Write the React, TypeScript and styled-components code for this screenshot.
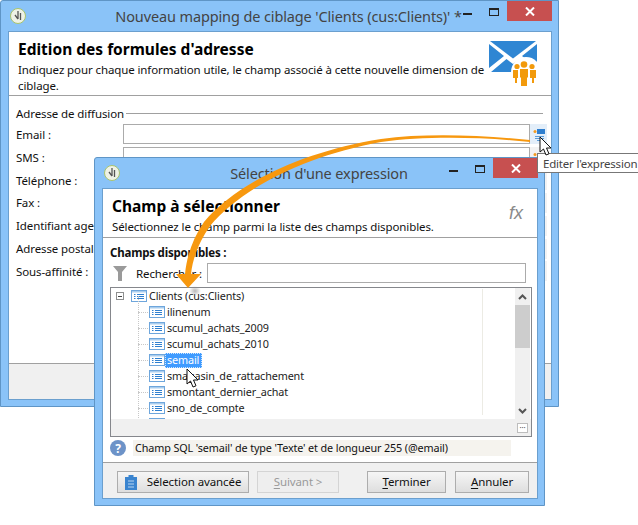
import styled, { createGlobalStyle } from "styled-components";

const GlobalStyle = createGlobalStyle`
  html, body {
    margin: 0;
    padding: 0;
    background: #fff;
  }
  body {
    font-family: "Noto Sans", "Open Sans", sans-serif;
    font-size: 11.5px;
    letter-spacing: -0.1px;
    color: #111;
  }
`;

const Desktop = styled.div`
  position: relative;
  width: 638px;
  height: 525px;
  overflow: hidden;
  background: #fff;
`;

const Window = styled.div<{ $x: number; $y: number; $w: number; $h: number }>`
  position: absolute;
  left: ${({ $x }) => $x}px;
  top: ${({ $y }) => $y}px;
  width: ${({ $w }) => $w}px;
  height: ${({ $h }) => $h}px;
  box-sizing: border-box;
  display: flex;
  flex-direction: column;
  padding: 0 6px 6px 7px;
  background: #8ac3f8;
  border: 1px solid #5f95c6;
  border-top-left-radius: 3px;
`;

const TitleBar = styled.div`
  height: 30px;
  flex: none;
  display: flex;
  align-items: flex-start;
`;

const AppIcon = styled.svg`
  flex: none;
  margin: 7px 0 0 2px;
`;

const Title = styled.div<{ $inset: number }>`
  flex: 1;
  min-width: 0;
  margin-left: ${({ $inset }) => $inset}px;
  padding-top: 5px;
  text-align: center;
  font-size: 14.5px;
  letter-spacing: -0.12px;
  line-height: 20px;
  color: #444;
  white-space: nowrap;
`;

const Controls = styled.div`
  flex: none;
  display: flex;
  width: 89px;
`;

const MinButton = styled.div`
  width: 9px;
  height: 2px;
  margin: 12px 17px 0 0;
  background: #222;
`;

const MaxButton = styled.div`
  width: 10px;
  height: 8px;
  box-sizing: border-box;
  margin: 7px 8px 0 0;
  border: 1px solid #222;
  border-top-width: 2px;
`;

const CloseButton = styled.div`
  width: 45px;
  height: 20px;
  display: flex;
  align-items: center;
  justify-content: center;
  background: #c75050;
`;

const Client = styled.div`
  flex: 1;
  min-height: 0;
  display: flex;
  flex-direction: column;
  background: #fff;
  border: 1px solid #6b9fce;
`;

const Header = styled.div<{ $height: number }>`
  position: relative;
  flex: none;
  height: ${({ $height }) => $height}px;
  box-sizing: border-box;
  padding: 6px 0 0 9px;
  border-bottom: 1px solid #a0a0a0;
`;

const Heading = styled.div`
  font-size: 15.5px;
  letter-spacing: 0;
  line-height: 22px;
  font-weight: 700;
  color: #000;
`;

const Description = styled.div`
  margin-top: 2px;
  line-height: 15.5px;
  white-space: nowrap;
`;

const HeaderGraphic = styled.svg`
  position: absolute;
  right: 14px;
  top: 9px;
`;

const FxMark = styled.div`
  position: absolute;
  right: 14px;
  top: 14px;
  font-family: "Liberation Sans", sans-serif;
  font-style: italic;
  font-size: 18px;
  letter-spacing: 0;
  color: #8a8a8a;
`;

const Body = styled.div`
  flex: 1;
  min-height: 0;
  padding: 7px 5px 0 7px;
`;

const GroupTitle = styled.div`
  display: flex;
  align-items: center;
  gap: 2px;
  height: 20px;
  margin-right: 3px;
  white-space: nowrap;

  &::after {
    content: "";
    flex: 1;
    height: 1px;
    background: #a0a0a0;
  }
`;

const FieldRow = styled.div`
  display: grid;
  grid-template-columns: 107px 407px 17px;
  align-items: center;
  height: 22.83px;
  white-space: nowrap;
`;

const FieldInput = styled.div`
  height: 20px;
  box-sizing: border-box;
  border: 1px solid #ababab;
  background: #fff;
`;

const FieldAction = styled.div<{ $hover?: boolean }>`
  height: 20px;
  display: flex;
  align-items: center;
  justify-content: center;
  background: ${({ $hover }) => ($hover ? "#e3eef9" : "#f2f2f2")};
`;

const Footer = styled.div<{ $height: number }>`
  flex: none;
  height: ${({ $height }) => $height}px;
  box-sizing: border-box;
  display: flex;
  align-items: center;
  padding: 2px 8px 0 14px;
  background: #f0f0f0;
  border-top: 1px solid #a0a0a0;
`;

const BoldLabel = styled.div`
  margin: -1px 0 1px;
  font-weight: 700;
  line-height: 18px;
  letter-spacing: -0.2px;
`;

const SearchRow = styled.div`
  display: flex;
  align-items: center;
  height: 20px;
  margin: 1px 6px 4px 0;
`;

const SearchLabel = styled.div`
  width: 71px;
  margin-left: 9px;
`;

const SearchInput = styled.div`
  flex: 1;
  height: 20px;
  box-sizing: border-box;
  border: 1px solid #ababab;
  background: #fff;
`;

const TreeBox = styled.div`
  height: 150px;
  box-sizing: border-box;
  display: flex;
  flex-direction: column;
  border: 1px solid #85878c;
  background: #f0f0f0;
`;

const TreeTop = styled.div`
  position: relative;
  flex: none;
  height: 131px;
  display: flex;
  background: #fff;
  overflow: hidden;
`;

const TreeList = styled.div`
  flex: 1;
`;

const TreeColumnRule = styled.div`
  flex: none;
  width: 1px;
  height: 126px;
  margin: 1px 32px 0 0;
  background: #ecebe4;
`;

const TreeRow = styled.div<{ $child?: boolean }>`
  position: relative;
  height: 16px;
  display: flex;
  align-items: center;
  padding-left: ${({ $child }) => ($child ? 38 : 5)}px;
  line-height: 16px;
  white-space: nowrap;

  ${({ $child }) =>
    $child &&
    `&::before {
      content: "";
      position: absolute;
      left: 27px;
      top: 8px;
      width: 10px;
      border-top: 1px dotted #c8c8c8;
    }
    &::after {
      content: "";
      position: absolute;
      left: 27px;
      top: -8px;
      height: 16px;
      border-left: 1px dotted #c8c8c8;
    }`}
`;

const Expander = styled.div`
  width: 8px;
  height: 8px;
  box-sizing: border-box;
  margin-right: 7px;
  display: flex;
  align-items: center;
  justify-content: center;
  border: 1px solid #8e8f8f;

  &::after {
    content: "";
    width: 4px;
    height: 1px;
    background: #444;
  }
`;

const RowText = styled.span<{ $selected?: boolean }>`
  height: 15px;
  line-height: 14px;
  padding: 0 3px 0 2px;
  font-size: 10.8px;
  letter-spacing: -0.12px;
  box-sizing: border-box;
  color: ${({ $selected }) => ($selected ? "#fff" : "#222")};
  background: ${({ $selected }) => ($selected ? "#3f9bff" : "transparent")};
  outline: ${({ $selected }) => ($selected ? "1px dotted #cfe6ff" : "none")};
  outline-offset: -1px;
`;

const Scrollbar = styled.div`
  flex: none;
  width: 15px;
  margin-right: 1px;
  display: flex;
  flex-direction: column;
  background: #f0f0f0;
`;

const ScrollArrow = styled.div`
  height: 17px;
  display: flex;
  align-items: center;
  justify-content: center;
`;

const ScrollThumb = styled.div`
  height: 43px;
  flex: none;
  background: #cdcdcd;
`;

const ScrollTrack = styled.div`
  flex: 1;
`;

const TreeCorner = styled.div`
  flex: 1;
  display: flex;
  justify-content: flex-end;
  align-items: center;
  padding-right: 3px;
`;

const CornerButton = styled.div`
  width: 11px;
  height: 10px;
  box-sizing: border-box;
  display: flex;
  align-items: center;
  justify-content: center;
  border: 1px solid #bdbdbd;
  background: #fff;
  font-size: 8px;
  line-height: 6px;
  color: #555;
`;

const StatusRow = styled.div`
  display: flex;
  align-items: center;
  gap: 7px;
  height: 16px;
  margin: 3px 21px 6px 0;
`;

const StatusText = styled.div`
  flex: 1;
  height: 16px;
  line-height: 15px;
  padding-left: 2px;
  font-size: 10.8px;
  letter-spacing: -0.12px;
  background: #f5f3ee;
  white-space: nowrap;
`;

const DialogButton = styled.div<{ $width: number; $disabled?: boolean; $gap?: number }>`
  width: ${({ $width }) => $width}px;
  height: 22px;
  margin-left: ${({ $gap }) => $gap ?? 0}px;
  box-sizing: border-box;
  flex: none;
  display: flex;
  align-items: center;
  justify-content: center;
  gap: 10px;
  border: 1px solid ${({ $disabled }) => ($disabled ? "#d4d4d4" : "#adadad")};
  background: ${({ $disabled }) =>
    $disabled ? "#eeeeee" : "linear-gradient(#f6f6f6, #dedede)"};
  color: ${({ $disabled }) => ($disabled ? "#9a9a9a" : "#111")};
  white-space: nowrap;

  u {
    text-underline-offset: 2px;
  }
`;

const Tooltip = styled.div`
  position: absolute;
  left: 537px;
  top: 153px;
  width: 101px;
  height: 20px;
  box-sizing: border-box;
  padding-left: 5px;
  line-height: 19px;
  letter-spacing: -0.2px;
  white-space: nowrap;
  color: #444;
  background: #fff;
  border: 1px solid #777;
  border-width: 1px 0 1px 1px;
`;

const Overlay = styled.svg`
  position: absolute;
  left: 0;
  top: 0;
  pointer-events: none;
`;

const ListIcon = () => (
  <svg width="16" height="12" viewBox="0 0 16 12" style={{ flex: "none" }}>
    <rect x="0.5" y="0.5" width="15" height="11" fill="#fff" stroke="#6ea6dc" />
    <rect x="1" y="1" width="14" height="1.5" fill="#a9cdee" />
    <path d="M3 4.5h1.5M3 6.5h1.5M3 8.5h1.5" stroke="#2f80d0" />
    <path d="M6 4.5h7M6 6.5h7M6 8.5h7" stroke="#2f80d0" />
  </svg>
);

const WindowIcon = () => (
  <AppIcon width="16" height="16" viewBox="0 0 16 16">
    <circle cx="8" cy="8" r="7.5" fill="#eef2e6" stroke="#a9c46c" />
    <path d="M8 3v8M10.5 5v7M5 7l3 4" stroke="#555" strokeWidth="1.3" fill="none" />
  </AppIcon>
);

const WindowControls = () => (
  <Controls>
    <MinButton />
    <MaxButton />
    <CloseButton>
      <svg width="10" height="9" viewBox="0 0 10 9">
        <path d="M1 .5l8 8M9 .5l-8 8" stroke="#fff" strokeWidth="2" />
      </svg>
    </CloseButton>
  </Controls>
);

const ExpressionIcon = ({ muted }: { muted?: boolean }) => (
  <svg width="12" height="13" viewBox="0 0 12 13">
    <circle cx="2" cy="3.5" r="1.5" fill="#f29a1f" />
    {!muted && <rect x="4" y="1" width="8" height="5" fill="#2f7fcf" />}
    {!muted && <path d="M2 8.5h9M2 10.5h9M4 12.5h7" stroke="#5a9bd8" />}
  </svg>
);

const fields = [
  "Email :",
  "SMS :",
  "Téléphone :",
  "Fax :",
  "Identifiant agence :",
  "Adresse postale :",
  "Sous-affinité :",
];

const treeItems = [
  "ilinenum",
  "scumul_achats_2009",
  "scumul_achats_2010",
  "semail",
  "smagasin_de_rattachement",
  "smontant_dernier_achat",
  "sno_de_compte",
  "",
];

const App = () => {
  return (
    <Desktop>
      <GlobalStyle />

      <Window $x={0} $y={0} $w={559} $h={407}>
        <TitleBar>
          <WindowIcon />
          <Title $inset={88}>Nouveau mapping de ciblage 'Clients (cus:Clients)' *</Title>
          <WindowControls />
        </TitleBar>
        <Client>
          <Header $height={64}>
            <Heading>Edition des formules d'adresse</Heading>
            <Description>
              Indiquez pour chaque information utile, le champ associé à cette nouvelle dimension de
              <br />
              ciblage.
            </Description>
            <HeaderGraphic width="48" height="46" viewBox="0 0 48 46">
              <path d="M1 0H47L24 17.5z" fill="#2f86d3" />
              <path d="M0 3L15 15L0 27zM48 3V27L33 15z" fill="#2f86d3" />
              <path d="M2 31L17.5 18L24 23L30.5 18L46 31z" fill="#2f86d3" />
              <circle cx="37" cy="31" r="15" fill="#fff" />
              <g fill="#f29a0c">
                <circle cx="35" cy="23.5" r="3.3" />
                <circle cx="28" cy="25.5" r="2.6" />
                <circle cx="43" cy="25.5" r="2.6" />
                <path d="M31 28h8v8.5h-1v8.5h-6v-8.5h-1z" />
                <path d="M24 29h5v8h-1v5h-2v-5h-2zM41 29h6v8h-2v5h-2v-5h-2z" />
              </g>
            </HeaderGraphic>
          </Header>
          <Body>
            <GroupTitle>Adresse de diffusion</GroupTitle>
            {fields.map((field, index) => (
              <FieldRow key={field}>
                <span>{field}</span>
                <FieldInput />
                <FieldAction $hover={index === 0}>
                  {index < 2 && <ExpressionIcon muted={index === 1} />}
                </FieldAction>
              </FieldRow>
            ))}
          </Body>
          <Footer $height={36} />
        </Client>
      </Window>

      <Window $x={94} $y={157} $w={451} $h={349}>
        <TitleBar>
          <WindowIcon />
          <Title $inset={69}>Sélection d'une expression</Title>
          <WindowControls />
        </TitleBar>
        <Client>
          <Header $height={49}>
            <Heading>Champ à sélectionner</Heading>
            <Description>Sélectionnez le champ parmi la liste des champs disponibles.</Description>
            <FxMark>fx</FxMark>
          </Header>
          <Body>
            <BoldLabel>Champs disponibles :</BoldLabel>
            <SearchRow>
              <svg width="14" height="15" viewBox="0 0 14 15" style={{ marginLeft: 3 }}>
                <path d="M0 0h14L9 6v9H5V6z" fill="#9a9a9a" />
              </svg>
              <SearchLabel>Rechercher :</SearchLabel>
              <SearchInput />
            </SearchRow>
            <TreeBox>
              <TreeTop>
                <TreeList>
                  <TreeRow>
                    <Expander />
                    <ListIcon />
                    <RowText>Clients (cus:Clients)</RowText>
                  </TreeRow>
                  {treeItems.map((item, index) => (
                    <TreeRow $child key={index}>
                      <ListIcon />
                      <RowText $selected={item === "semail"}>{item}</RowText>
                    </TreeRow>
                  ))}
                </TreeList>
                <TreeColumnRule />
                <Scrollbar>
                  <ScrollArrow>
                    <svg width="9" height="6" viewBox="0 0 9 6">
                      <path d="M1 5l3.5-3.5L8 5" stroke="#555" strokeWidth="2" fill="none" />
                    </svg>
                  </ScrollArrow>
                  <ScrollThumb />
                  <ScrollTrack />
                  <ScrollArrow>
                    <svg width="9" height="6" viewBox="0 0 9 6">
                      <path d="M1 1l3.5 3.5L8 1" stroke="#555" strokeWidth="2" fill="none" />
                    </svg>
                  </ScrollArrow>
                </Scrollbar>
              </TreeTop>
              <TreeCorner>
                <CornerButton>···</CornerButton>
              </TreeCorner>
            </TreeBox>
            <StatusRow>
              <svg width="16" height="16" viewBox="0 0 16 16" style={{ flex: "none" }}>
                <circle cx="8" cy="8" r="8" fill="#6d93c8" />
                <text x="8" y="12.5" textAnchor="middle" fontSize="12" fontWeight="700" fill="#fff" fontFamily="Noto Sans">
                  ?
                </text>
              </svg>
              <StatusText>Champ SQL 'semail' de type 'Texte' et de longueur 255 (@email)</StatusText>
            </StatusRow>
          </Body>
          <Footer $height={36}>
            <DialogButton $width={132}>
              <svg width="12" height="16" viewBox="0 0 12 16">
                <path d="M0 3h3.5V1h5v2H12v13H0z" fill="#3a84cf" />
                <path d="M3 7h6M3 10h6M3 13h6" stroke="#b9d5f0" />
              </svg>
              Sélection avancée
            </DialogButton>
            <DialogButton $width={82} $gap={8} $disabled>
              <span>
                <u>S</u>uivant &gt;
              </span>
            </DialogButton>
            <DialogButton $width={79} $gap={28}>
              <span>
                <u>T</u>erminer
              </span>
            </DialogButton>
            <DialogButton $width={74} $gap={9}>
              <span>
                <u>A</u>nnuler
              </span>
            </DialogButton>
          </Footer>
        </Client>
      </Window>

      <Tooltip>Editer l'expression</Tooltip>

      <Overlay width="638" height="525" viewBox="0 0 638 525">
        <defs>
          <radialGradient id="tipShadow">
            <stop offset="0" stopColor="#888" stopOpacity="0.6" />
            <stop offset="1" stopColor="#888" stopOpacity="0" />
          </radialGradient>
        </defs>
        <ellipse cx="195" cy="291" rx="6" ry="5" fill="url(#tipShadow)" />
        <path
          d="M530 140C480 135 425 133 381 139C300 152 236 184 204 222C193 238 187 255 185 274L176 274L188 288L201 274L191 274C193 257 199 242 210 226C242 188 304 156 381 142C425 136 480 137 530 142Z"
          fill="#f7980f"
        />
        <path
          d="M540 137v15l3.5-3 2.5 6 3-1.2-2.5-5.8h4.5z"
          fill="#fff"
          stroke="#111"
          strokeWidth="1"
        />
        <path
          d="M187 369v15l3.5-3 2.5 6 3-1.2-2.5-5.8h4.5z"
          fill="#fff"
          stroke="#111"
          strokeWidth="1"
        />
      </Overlay>
    </Desktop>
  );
};

export default App;
